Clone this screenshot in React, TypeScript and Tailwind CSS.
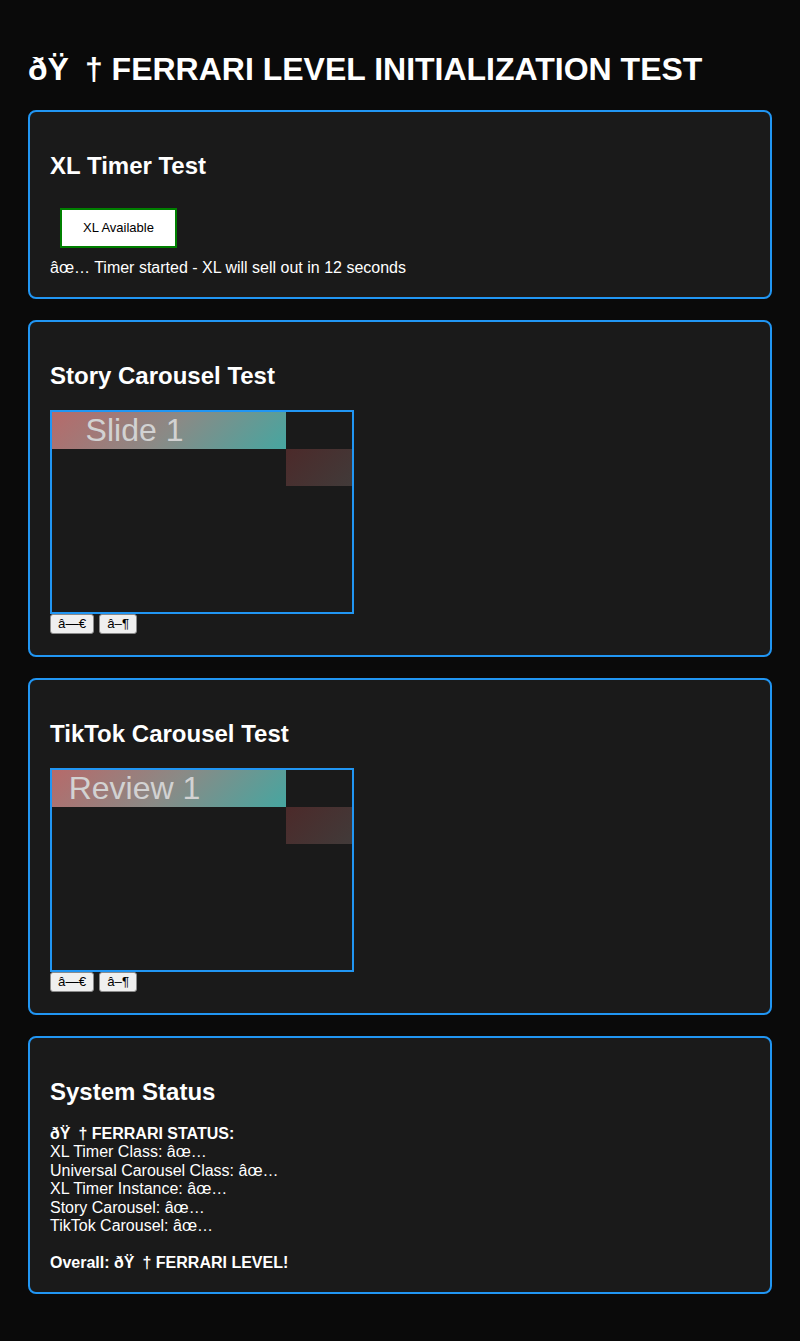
import React from 'react';

const TROPHY = 'ðŸ\u2002†';
const CHECK = 'âœ…';

const Card: React.FC<{ title: string; children: React.ReactNode }> = ({ title, children }) => (
  <div className="mb-[21px] rounded-[8px] border-2 border-[#2196f3] bg-[#1a1a1a] p-[20px]">
    <h2 className="mt-[20px] mb-[19px] text-[24px] font-bold leading-[28px] text-white">{title}</h2>
    {children}
  </div>
);

const Carousel: React.FC<{ label: string }> = ({ label }) => (
  <div className="pt-px">
    <div className="flex h-[204px] w-[304px] items-start overflow-hidden border-2 border-[#2196f3]">
      <div className="h-[37px] w-[234px] shrink-0 bg-[linear-gradient(135deg,#b66a6a,#8a8a86_50%,#46a6a0)]">
        <div className="w-[165px] text-center text-[32px] leading-[37px] text-[#d2d2d2]">{label}</div>
      </div>
      <div className="mt-[37px] h-[37px] w-[234px] shrink-0 bg-[linear-gradient(135deg,#4c2a2a,#2f5552)]" />
    </div>
    <div className="flex h-[21px] gap-[5px]">
      <button className="h-[20px] rounded-[3px] border border-[#8a8a8a] bg-[#efefef] px-[7px] text-[13.33px] leading-[16px] text-black">
        â—€
      </button>
      <button className="h-[20px] rounded-[3px] border border-[#8a8a8a] bg-[#efefef] px-[7px] text-[13.33px] leading-[16px] text-black">
        â–¶
      </button>
    </div>
  </div>
);

export default function App() {
  return (
    <div className="min-h-[1341px] bg-[#0a0a0a] px-[28px] pt-[28px] pb-[26px] font-['Liberation_Sans',Arial,sans-serif] text-white">
      <h1 className="mt-[23px] mb-[22px] text-[32px] font-bold leading-[37px]">
        {TROPHY} FERRARI LEVEL INITIALIZATION TEST
      </h1>

      <Card title="XL Timer Test">
        <button className="mt-[28px] ml-[10px] block h-[40px] w-[117px] border-2 border-[#008000] bg-white text-[13px] text-black">
          XL Available
        </button>
        <div className="mt-[10px] text-[16px] leading-[19px]">{CHECK} Timer started - XL will sell out in 12 seconds</div>
      </Card>

      <Card title="Story Carousel Test">
        <Carousel label="Slide 1" />
      </Card>

      <Card title="TikTok Carousel Test">
        <Carousel label="Review 1" />
      </Card>

      <Card title="System Status">
        <div className="text-[16px] leading-[18.4px]">
          <div className="font-bold">{TROPHY} FERRARI STATUS:</div>
          <div>XL Timer Class: {CHECK}</div>
          <div>Universal Carousel Class: {CHECK}</div>
          <div>XL Timer Instance: {CHECK}</div>
          <div>Story Carousel: {CHECK}</div>
          <div>TikTok Carousel: {CHECK}</div>
          <div className="h-[18.4px]" />
          <div className="font-bold">Overall: {TROPHY} FERRARI LEVEL!</div>
        </div>
      </Card>
    </div>
  );
}
